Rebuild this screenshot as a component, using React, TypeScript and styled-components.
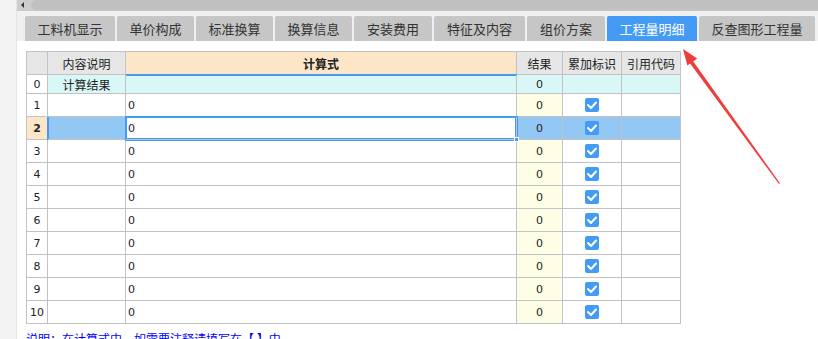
import React from "react";
import styled, { createGlobalStyle } from "styled-components";

const GlobalStyle = createGlobalStyle`
  html, body { margin: 0; padding: 0; background: #ffffff; overflow: hidden; }
  body { font-family: "Noto Sans CJK SC", "Noto Sans", sans-serif; }
  * { box-sizing: border-box; }
`;

const Page = styled.div`
  position: relative;
  display: flex;
  width: 818px;
  height: 339px;
  overflow: hidden;
  background: #ffffff;
`;

const LeftStrip = styled.div`
  width: 17px;
  flex: none;
  background: #f3f3f3;
  border-right: 1px solid #e4e4e4;
`;

const Main = styled.div`
  flex: 1;
  display: flex;
  flex-direction: column;
  min-width: 0;
`;

const ScrollBar = styled.div`
  height: 12px;
  display: flex;
  align-items: flex-start;
  background: #f0f0f0;
  border-bottom: 1px solid #c8c8c8;
  box-shadow: inset 0 -2px 0 #e8e8e8;
`;

const ScrollTrack = styled.div`
  flex: 1;
  height: 10px;
  display: flex;
  align-items: center;
  background: #cdcdcd;
  padding-left: 4px;
  gap: 7px;
`;

const ScrollArrow = styled.div`
  width: 0;
  height: 0;
  border-top: 3px solid transparent;
  border-bottom: 3px solid transparent;
  border-right: 3px solid #333;
`;

const ScrollThumb = styled.div`
  flex: 1;
  height: 10px;
  background: #c0c0c0;
  border-radius: 5px 0 0 5px;
`;

const TabBar = styled.div`
  display: flex;
  gap: 2px;
  padding: 5px 0 0 8px;
  background: #f0f0f0;
  height: 30px;
`;

const Tab = styled.div<{ $w: number; $active?: boolean }>`
  width: ${(p) => p.$w}px;
  height: 25px;
  flex: none;
  display: flex;
  align-items: center;
  justify-content: center;
  font-size: 13px;
  color: ${(p) => (p.$active ? "#ffffff" : "#333333")};
  background: ${(p) => (p.$active ? "#449bf6" : "#c6c6c6")};
  border-radius: 2px 2px 0 0;
`;

const Body = styled.div`
  padding: 10px 0 0 9px;
  display: flex;
  flex-direction: column;
`;

const Grid = styled.div`
  display: grid;
  grid-template-columns: 21px 78px 391px 46px 59px 59px;
  grid-template-rows: 23px 19px repeat(10, 23px);
  width: 655px;
  border-top: 1px solid #c2c2c2;
  border-left: 1px solid #c2c2c2;
  font-size: 12px;
  color: #222;
`;

const CellBase = styled.div`
  border-right: 1px solid #c2c2c2;
  border-bottom: 1px solid #c2c2c2;
  display: flex;
  align-items: center;
  white-space: nowrap;
  overflow: visible;
`;

const HeadCell = styled(CellBase)<{ $peach?: boolean }>`
  justify-content: center;
  background: ${(p) => (p.$peach ? "#fde6c8" : "#e6e6e6")};
  font-weight: ${(p) => (p.$peach ? 700 : 400)};
  color: #222;
  font-size: 12px;
`;

const IndexCell = styled(CellBase)<{ $active?: boolean }>`
  justify-content: center;
  background: ${(p) => (p.$active ? "#fde6c8" : "#ffffff")};
  font-weight: ${(p) => (p.$active ? 700 : 400)};
  font-family: "DejaVu Sans", sans-serif;
  font-size: 11px;
`;

const DescCell = styled(CellBase)<{ $bg: string; $mark?: boolean }>`
  justify-content: center;
  background: ${(p) => p.$bg};
  box-shadow: ${(p) => (p.$mark ? "inset 1px 0 0 #449bf6, -1px 0 0 #449bf6" : "none")};
`;

const FormulaCell = styled(CellBase)<{ $bg: string; $topMark?: boolean; $editing?: boolean }>`
  position: ${(p) => (p.$editing ? "relative" : "static")};
  z-index: ${(p) => (p.$editing ? 1 : "auto")};
  padding-left: 2px;
  background: ${(p) => p.$bg};
  font-family: "DejaVu Sans", sans-serif;
  font-size: 11px;
  box-shadow: ${(p) =>
    p.$editing
      ? "0 0 0 1px #449bf6, inset 0 0 0 1px #449bf6"
      : p.$topMark
      ? "0 -1px 0 #449bf6, inset 0 1px 0 #449bf6"
      : "none"};
`;

const Handle = styled.span`
  position: absolute;
  right: -3px;
  bottom: -3px;
  width: 5px;
  height: 5px;
  background: #449bf6;
  border: 1px solid #ffffff;
`;

const ValueCell = styled(CellBase)<{ $bg: string }>`
  justify-content: center;
  background: ${(p) => p.$bg};
  font-family: "DejaVu Sans", sans-serif;
  font-size: 11px;
`;

const FlagCell = styled(CellBase)<{ $bg: string }>`
  justify-content: center;
  background: ${(p) => p.$bg};
`;

const CodeCell = styled(CellBase)<{ $bg: string }>`
  background: ${(p) => p.$bg};
`;

const Check = styled.span`
  width: 14px;
  height: 14px;
  border-radius: 2px;
  background: #449bf6;
  display: flex;
  align-items: center;
  justify-content: center;
`;

const Note = styled.div`
  margin-top: 7px;
  font-size: 12px;
  line-height: 16px;
  color: #0000ff;
  white-space: nowrap;
`;

const ArrowLayer = styled.svg`
  position: absolute;
  left: 0;
  top: 0;
  pointer-events: none;
`;

const tabs: { label: string; w: number; active?: boolean }[] = [
  { label: "工料机显示", w: 90 },
  { label: "单价构成", w: 77 },
  { label: "标准换算", w: 77 },
  { label: "换算信息", w: 77 },
  { label: "安装费用", w: 78 },
  { label: "特征及内容", w: 91 },
  { label: "组价方案", w: 78 },
  { label: "工程量明细", w: 90, active: true },
  { label: "反查图形工程量", w: 116 },
];

const CheckMark = () => (
  <Check>
    <svg width="10" height="8" viewBox="0 0 10 8">
      <polyline points="1,4 4,7 9,1.5" fill="none" stroke="#ffffff" strokeWidth="2" strokeLinecap="round" strokeLinejoin="round" />
    </svg>
  </Check>
);

const rows = Array.from({ length: 10 }, (_, i) => i + 1);

export default function App() {
  return (
    <>
      <GlobalStyle />
      <Page>
        <LeftStrip />
        <Main>
          <ScrollBar>
            <ScrollTrack>
              <ScrollArrow />
              <ScrollThumb />
            </ScrollTrack>
          </ScrollBar>
          <TabBar>
            {tabs.map((t) => (
              <Tab key={t.label} $w={t.w} $active={t.active}>
                {t.label}
              </Tab>
            ))}
          </TabBar>
          <Body>
            <Grid>
              <HeadCell />
              <HeadCell>内容说明</HeadCell>
              <HeadCell $peach>计算式</HeadCell>
              <HeadCell>结果</HeadCell>
              <HeadCell>累加标识</HeadCell>
              <HeadCell>引用代码</HeadCell>

              <IndexCell>0</IndexCell>
              <DescCell $bg="#d9f7f7">计算结果</DescCell>
              <FormulaCell $bg="#d9f7f7" $topMark />
              <ValueCell $bg="#d9f7f7">0</ValueCell>
              <FlagCell $bg="#d9f7f7" />
              <CodeCell $bg="#d9f7f7" />

              {rows.map((n) => {
                const sel = n === 2;
                const bg = sel ? "#94c8f4" : "#ffffff";
                return (
                  <React.Fragment key={n}>
                    <IndexCell $active={sel}>{n}</IndexCell>
                    <DescCell $bg={bg} $mark={sel} />
                    <FormulaCell $bg="#ffffff" $editing={sel}>
                      0{sel && <Handle />}
                    </FormulaCell>
                    <ValueCell $bg={sel ? "#94c8f4" : "#fefee6"}>0</ValueCell>
                    <FlagCell $bg={bg}>
                      <CheckMark />
                    </FlagCell>
                    <CodeCell $bg={bg} />
                  </React.Fragment>
                );
              })}
            </Grid>
            <Note>说明：在计算式中，如需要注释请填写在【 】中</Note>
          </Body>
        </Main>
        <ArrowLayer width="818" height="339" viewBox="0 0 818 339">
          <polygon points="779,184 780,183.3 692.6,60.4 689.4,62.6" fill="#f03c3c" />
          <polygon points="683,49 697.2,58.5 687.4,65.5" fill="#f03c3c" />
        </ArrowLayer>
      </Page>
    </>
  );
}
